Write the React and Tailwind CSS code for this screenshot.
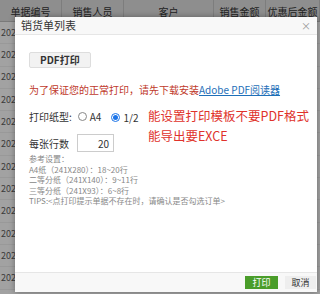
import React from 'react'

const FONT = { fontFamily: '"Noto Sans CJK SC", "Liberation Sans", sans-serif' }

const COLS = [
  { label: '单据编号', w: 'w-[62px]' },
  { label: '销售人员', w: 'w-[62px]' },
  { label: '客户', w: 'w-[90px]' },
  { label: '销售金额', w: 'w-[52px]' },
  { label: '优惠后金额', w: 'flex-1' },
]

function BackTable() {
  const rows = Array.from({ length: 12 })
  return (
    <div className="w-[320px] h-[294px] bg-[#a2a2a2] overflow-hidden">
      <div className="flex h-[22px] bg-[#8e8e8e] text-[10px] text-[#222] border-b border-[#7a7a7a]">
        {COLS.map(c => (
          <div key={c.label} className={`${c.w} flex items-start justify-center border-r border-[#7d7d7d] pt-[4px]`}>{c.label}</div>
        ))}
      </div>
      {rows.map((_, i) => (
        <div key={i} className="h-[22.3px] flex items-center border-b border-[#999] text-[9px] text-[#3a3a3a] pl-[1px]">
          2022
        </div>
      ))}
    </div>
  )
}

function Radio({ checked, label }) {
  return (
    <span className="inline-flex items-center gap-[3px]">
      <span className={`w-[9px] h-[9px] rounded-full border flex items-center justify-center ${checked ? 'border-[#1a73e8]' : 'border-[#888]'}`}>
        {checked && <span className="w-[5px] h-[5px] rounded-full bg-[#1a73e8]" />}
      </span>
      <span>{label}</span>
    </span>
  )
}

export default function App() {
  return (
    <div className="relative w-[320px] h-[294px] overflow-hidden" style={FONT}>
      <BackTable />

      <div className="absolute left-[15px] top-[17px] w-[302px] h-[275px] bg-white shadow-[0_0_6px_rgba(0,0,0,0.35)] flex flex-col">
        <div className="h-[18px] bg-[#f8f8f8] border-b border-[#e6e6e6] flex items-center justify-between px-[6px] shrink-0">
          <span className="text-[11px] text-[#333]">销货单列表</span>
          <span className="text-[10px] text-[#999] leading-none">×</span>
        </div>

        <div className="flex-1 px-[14px] pt-[17px] text-[10px] text-[#333]">
          <button className="h-[16px] px-[10px] bg-[#f2f2f2] border border-[#ddd] rounded-[2px] text-[10px] font-bold text-[#333] leading-none">PDF打印</button>

          <div className="mt-[14px] text-[10px] text-[#c0392b] whitespace-nowrap">
            为了保证您的正常打印，请先下载安装<span className="text-[#1e6fb8] underline">Adobe PDF阅读器</span>
          </div>

          <div className="mt-[12px] flex">
            <div className="w-[119px] shrink-0 whitespace-nowrap">
              <div className="flex items-center gap-[6px] h-[14px]">
                <span className="text-[10px]">打印纸型:</span>
                <Radio label="A4" />
                <span className="ml-[4px]"><Radio checked label="1/2" /></span>
              </div>
              <div className="mt-[11px] flex items-center gap-[8px]">
                <span>每张行数</span>
                <div className="w-[37px] h-[18px] border border-[#ccc] flex items-center justify-end pr-[4px] text-[10px]">20</div>
              </div>
            </div>
            <div className="text-[12.5px] leading-[20px] text-[#e0322b] -mt-[3px] whitespace-nowrap">
              <div>能设置打印模板不要PDF格式</div>
              <div>能导出要EXCE</div>
            </div>
          </div>

          <div className="mt-[2px] text-[8px] leading-[10.5px] text-[#888] whitespace-nowrap">
            <div>参考设置：</div>
            <div>A4纸（241X280）：18~20行</div>
            <div>二等分纸（241X140）：9~11行</div>
            <div>三等分纸（241X93）：6~8行</div>
            <div>TIPS:&lt;点打印提示单据不存在时，请确认是否勾选订单&gt;</div>
          </div>
        </div>

        <div className="h-[20px] bg-[#f8f8f8] border-t border-[#e6e6e6] flex items-center justify-end gap-[7px] pr-[1px] shrink-0">
          <button className="w-[33px] h-[13px] bg-[#4a9d2a] text-white text-[9px] leading-none">打印</button>
          <button className="w-[31px] h-[13px] bg-[#eee] text-[#333] text-[9px] leading-none">取消</button>
        </div>
      </div>
    </div>
  )
}
